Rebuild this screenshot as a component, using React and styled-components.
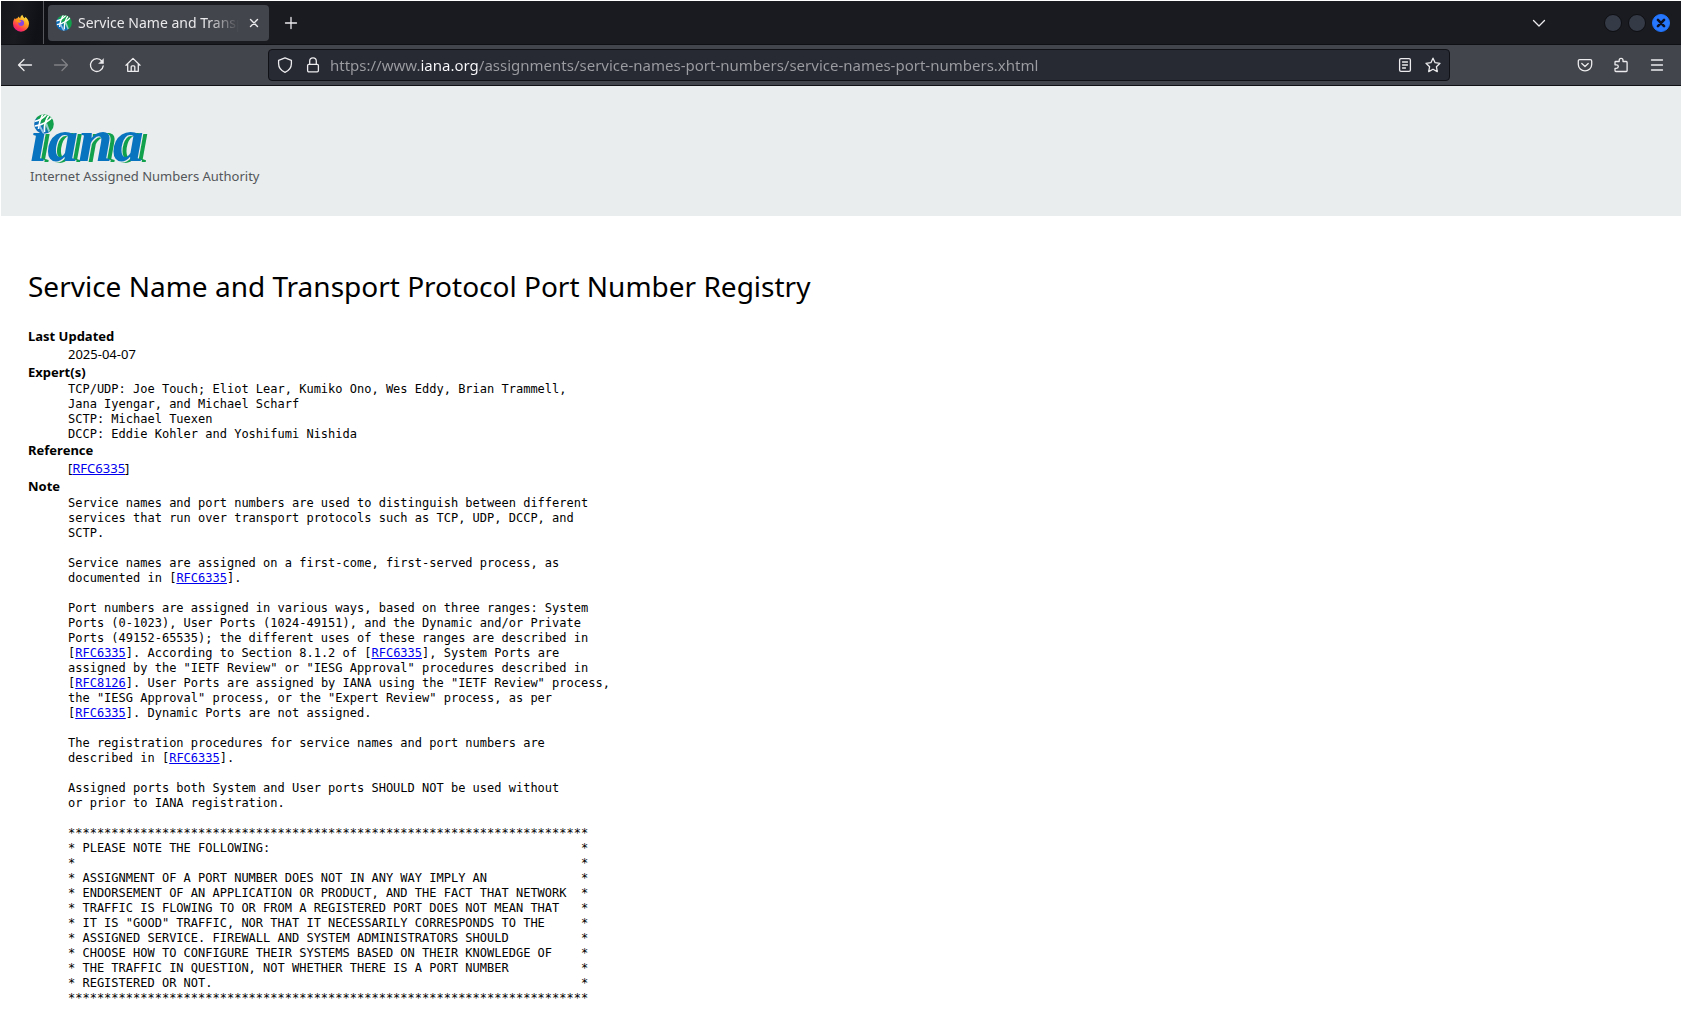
import React from "react";
import styled, { createGlobalStyle } from "styled-components";

const sans = '"Noto Sans", "Open Sans", sans-serif';
const mono = '"DejaVu Sans Mono", monospace';

const GlobalStyle = createGlobalStyle`
  *, *::before, *::after { box-sizing: border-box; }
  body { margin: 0; background: #fff; color: #000; font-family: ${sans}; }
`;

const Window = styled.div`
  min-height: 100vh;
  padding: 1px 1px 0;
  background: #fff;
`;

/* ---------- browser chrome ---------- */

const TabBar = styled.div`
  display: flex;
  align-items: center;
  height: 44px;
  border-bottom: 1px solid #0f1014;
  background: linear-gradient(100deg, #15161b 0, #1a1b20 20px, #101116 40px, #15161b 90px, #1a1b20 130px);
`;

const IconButton = styled.button`
  display: flex;
  flex: none;
  align-items: center;
  justify-content: center;
  width: ${(p) => p.$width || 36}px;
  height: 32px;
  padding: 0;
  border: 0;
  background: none;
  color: ${(p) => (p.$dim ? "#7f8085" : "#ececee")};
`;

const FirefoxView = styled(IconButton)`
  width: 43px;
  height: 43px;
  padding-right: 2px;
  border-right: 1px solid #55565b;
`;

const Tab = styled.div`
  display: flex;
  flex: none;
  align-items: center;
  width: 221px;
  height: 36px;
  margin-left: 4px;
  padding-left: 8px;
  border-radius: 4px;
  background: #43454c;
`;

const TabTitle = styled.span`
  flex: 1;
  min-width: 0;
  margin-left: 6px;
  overflow: hidden;
  color: #e9e9eb;
  font-size: 14px;
  line-height: 24px;
  white-space: nowrap;
  mask-image: linear-gradient(90deg, #000 calc(100% - 32px), transparent);
`;

const Spacer = styled.div`
  flex: 1;
`;

const WindowControls = styled.div`
  display: flex;
  gap: 6px;
  margin: 0 11px 0 47px;
`;

const WindowButton = styled.button`
  display: flex;
  align-items: center;
  justify-content: center;
  width: 18px;
  height: 18px;
  padding: 0;
  border: 1px solid ${(p) => (p.$close ? "#1f73fb" : "#0d0e11")};
  border-radius: 50%;
  background: ${(p) => (p.$close ? "#2777ff" : "#353a47")};
  color: #0c1020;
`;

const Toolbar = styled.div`
  display: flex;
  align-items: center;
  height: 41px;
  padding: 0 6px;
  border-bottom: 1px solid #0f1014;
  background: #43454c;
`;

const NavGroup = styled.nav`
  display: flex;
  flex: 1 1 0;
`;

const ToolGroup = styled.div`
  display: flex;
  flex: 1 1 0;
  justify-content: flex-end;
`;

const AddressBar = styled.div`
  display: flex;
  flex: 0 1 1218px;
  align-items: center;
  height: 32px;
  margin-left: 36px;
  padding: 0 2px;
  border: 1px solid #101116;
  border-radius: 4px;
  background: #272933;
`;

const AddressInput = styled.input`
  flex: 1;
  min-width: 0;
  height: 24px;
  margin-left: 3px;
  padding: 0;
  border: 0;
  outline: 0;
  background: linear-gradient(90deg, #9c9da2 91px, #fbfbfe 91px 149px, #9c9da2 149px);
  background-clip: text;
  color: transparent;
  font: 15px/24px ${sans};
`;

const AddressGroup = styled.div`
  display: flex;
  flex: 0 1 1218px;
`;

/* ---------- page ---------- */

const SiteHeader = styled.header`
  height: 130px;
  padding: 24px 29px;
  background: #e9eded;
`;

const Brand = styled.a`
  display: inline-flex;
  flex-direction: column;
  color: #53565a;
  text-decoration: none;
`;

const BrandMark = styled.span`
  position: relative;
  height: 56px;
`;

const BrandGlobe = styled.span`
  position: absolute;
  top: 4px;
  left: 4px;
  z-index: 1;
`;

const BrandWord = styled.span`
  display: block;
  padding-top: 5px;
  color: #0873bf;
  font: italic bold 62px/50px "Liberation Serif", serif;
  text-shadow: 1px 1px #e9eded, 2px 1px #12a04c, 3px 1px #12a04c, 4px 1px #12a04c, 5px 1px #12a04c;
`;

const BrandName = styled.span`
  font-size: 13px;
  line-height: 20px;
`;

const Article = styled.main`
  padding: 51px 27px 0;
`;

const Title = styled.h1`
  margin: 0 0 22px;
  font-size: 28px;
  font-weight: 400;
  line-height: 38px;
`;

const Details = styled.dl`
  margin: 0;
  font-size: 13px;
  line-height: 18px;
`;

const Term = styled.dt`
  font-weight: 700;
`;

const Detail = styled.dd`
  margin: 0 0 0 40px;
`;

const Pre = styled.pre`
  margin: 0;
  padding-top: 1px;
  margin-bottom: -1px;
  font: 12px/15px ${mono};
`;

const Line = styled.span`
  display: block;
  min-height: 15px;
`;

const Link = styled.a`
  color: #0000ee;
  text-decoration: underline;
`;

/* ---------- icons ---------- */

const Icon = ({ children, size = 16, width = 1.3 }) => (
  <svg
    width={size}
    height={size}
    viewBox="0 0 16 16"
    fill="none"
    stroke="currentColor"
    strokeWidth={width}
    strokeLinecap="round"
    strokeLinejoin="round"
    aria-hidden="true"
  >
    {children}
  </svg>
);

const Globe = ({ size, id }) => (
  <svg width={size} height={size} viewBox="0 0 20 20" aria-hidden="true">
    <defs>
      <clipPath id={id}>
        <circle cx="10" cy="10" r="9.8" />
      </clipPath>
      <linearGradient id={id + "-g"} x1="1" y1="0" x2="0" y2="1">
        <stop offset=".5" stopColor="#12a04c" />
        <stop offset=".62" stopColor="#0d6fbb" />
      </linearGradient>
    </defs>
    <g clipPath={`url(#${id})`}>
      <rect width="20" height="20" fill={`url(#${id}-g)`} />
      <g fill="none" stroke="#fff" strokeWidth="1.7">
        <path d="M0 7.500C5 6.500 10 4 13.500-1M1 12C8 11 15 7.500 19.500 1.500" />
        <path d="M9.500-1C6.500 4 5 9 4.500 15M15 1C11.500 6 10 12 10.500 18" />
      </g>
      <path d="M4.500 12l2-.6 4.500 8.600h-2zM11 10l2-1 3 8-1.500 1z" fill="#b8d8ef" opacity=".8" />
    </g>
  </svg>
);

const Firefox = () => (
  <svg width="18" height="18" viewBox="0 0 18 18" aria-hidden="true">
    <defs>
      <linearGradient id="fx-flame" x1=".85" y1=".05" x2=".25" y2="1">
        <stop offset="0" stopColor="#fff44f" />
        <stop offset=".4" stopColor="#ffa01e" />
        <stop offset=".75" stopColor="#ff3a50" />
        <stop offset="1" stopColor="#e31587" />
      </linearGradient>
    </defs>
    <path
      d="M10.400.8c.3 1.700 1.200 2.400 2.300 3.500.5-.3.500-.9.400-1.500 2.300 1.500 3.900 4 3.900 6.900A8 8 0 0 1 1 9.700c0-2.200.7-4 2-5.600l.3 1.100c.7-.8 1.500-1 2.200-.9.200-.9.700-1.500 1.500-1.900 0 .8.500 1.500 1.200 1.900.1-1.400.8-2.700 2.200-3.500z"
      fill="url(#fx-flame)"
    />
    <circle cx="9.200" cy="9" r="2.900" fill="#8a45e0" />
    <path d="M3.800 6.600c2-1 3.600.4 5.600.3-.3 1.200-1.500 1.200-2 2.100-.7-.8-2.500-.5-3.600-2.400z" fill="#ff980e" />
  </svg>
);

/* ---------- content ---------- */

const notice = [
  "PLEASE NOTE THE FOLLOWING:",
  "",
  "ASSIGNMENT OF A PORT NUMBER DOES NOT IN ANY WAY IMPLY AN",
  "ENDORSEMENT OF AN APPLICATION OR PRODUCT, AND THE FACT THAT NETWORK",
  "TRAFFIC IS FLOWING TO OR FROM A REGISTERED PORT DOES NOT MEAN THAT",
  'IT IS "GOOD" TRAFFIC, NOR THAT IT NECESSARILY CORRESPONDS TO THE',
  "ASSIGNED SERVICE. FIREWALL AND SYSTEM ADMINISTRATORS SHOULD",
  "CHOOSE HOW TO CONFIGURE THEIR SYSTEMS BASED ON THEIR KNOWLEDGE OF",
  "THE TRAFFIC IN QUESTION, NOT WHETHER THERE IS A PORT NUMBER",
  "REGISTERED OR NOT.",
];

const starRow = "*".repeat(72);
const noticeBox = [starRow, ...notice.map((line) => `* ${line.padEnd(69)}*`), starRow].join("\n");

const experts = `TCP/UDP: Joe Touch; Eliot Lear, Kumiko Ono, Wes Eddy, Brian Trammell,
Jana Iyengar, and Michael Scharf
SCTP: Michael Tuexen
DCCP: Eddie Kohler and Yoshifumi Nishida`;

const note = `Service names and port numbers are used to distinguish between different
services that run over transport protocols such as TCP, UDP, DCCP, and
SCTP.

Service names are assigned on a first-come, first-served process, as
documented in [RFC6335].

Port numbers are assigned in various ways, based on three ranges: System
Ports (0-1023), User Ports (1024-49151), and the Dynamic and/or Private
Ports (49152-65535); the different uses of these ranges are described in
[RFC6335]. According to Section 8.1.2 of [RFC6335], System Ports are
assigned by the "IETF Review" or "IESG Approval" procedures described in
[RFC8126]. User Ports are assigned by IANA using the "IETF Review" process,
the "IESG Approval" process, or the "Expert Review" process, as per
[RFC6335]. Dynamic Ports are not assigned.

The registration procedures for service names and port numbers are
described in [RFC6335].

Assigned ports both System and User ports SHOULD NOT be used without
or prior to IANA registration.

${noticeBox}`;

// Turns every RFC number in a text into a link to that RFC.
const withLinks = (text) =>
  text.split(/(RFC\d+)/).map((part, i) =>
    i % 2 ? (
      <Link key={i} href={`#${part.toLowerCase()}`}>
        {part}
      </Link>
    ) : (
      part
    )
  );

const Preformatted = ({ text }) => (
  <Pre>
    {text.split("\n").map((line, i) => (
      <Line key={i}>{withLinks(line)}</Line>
    ))}
  </Pre>
);

const url = "https://www.iana.org/assignments/service-names-port-numbers/service-names-port-numbers.xhtml";

export default function App() {
  return (
    <Window>
      <GlobalStyle />
      <TabBar>
        <FirefoxView aria-label="Firefox View">
          <Firefox />
        </FirefoxView>
        <Tab>
          <Globe size={16} id="tab-globe" />
          <TabTitle>Service Name and Transport Protocol</TabTitle>
          <IconButton $width={30} aria-label="Close tab">
            <Icon width={1.4}>
              <path d="M4.500 4.500l7 7M11.500 4.500l-7 7" />
            </Icon>
          </IconButton>
        </Tab>
        <IconButton $width={44} aria-label="New tab">
          <Icon>
            <path d="M8 2.500v11M2.500 8h11" />
          </Icon>
        </IconButton>
        <Spacer />
        <IconButton aria-label="List all tabs">
          <Icon>
            <path d="M2.500 5.500L8 11l5.500-5.500" />
          </Icon>
        </IconButton>
        <WindowControls>
          <WindowButton aria-label="Minimize" />
          <WindowButton aria-label="Maximize" />
          <WindowButton $close aria-label="Close">
            <Icon size={14} width={3}>
              <path d="M4.500 4.500l7 7M11.500 4.500l-7 7" />
            </Icon>
          </WindowButton>
        </WindowControls>
      </TabBar>

      <Toolbar>
        <NavGroup aria-label="Navigation">
          <IconButton aria-label="Back">
            <Icon>
              <path d="M14.500 8h-13M7 2.500L1.500 8 7 13.500" />
            </Icon>
          </IconButton>
          <IconButton $dim aria-label="Forward">
            <Icon>
              <path d="M1.500 8h13M9 2.500L14.500 8 9 13.500" />
            </Icon>
          </IconButton>
          <IconButton aria-label="Reload">
            <Icon>
              <path d="M14.200 8.800A6.400 6.400 0 1 1 12.800 4" />
              <path d="M14.500 2v4.500H10z" fill="currentColor" strokeWidth=".5" />
            </Icon>
          </IconButton>
          <IconButton aria-label="Home">
            <Icon>
              <path d="M1 8.200L8 1.400l7 6.800M2.700 7v7.300h10.600V7M6.200 14.200V9.800c0-.6.4-1 1-1h1.600c.6 0 1 .4 1 1v4.400" />
            </Icon>
          </IconButton>
        </NavGroup>
        <AddressGroup>
          <AddressBar>
            <IconButton $width={28} aria-label="Tracking protection">
              <Icon>
                <path d="M8 .8l6.400 2.500v3.500c0 4-2.900 7-6.400 8.500-3.500-1.500-6.400-4.500-6.400-8.500V3.300z" />
              </Icon>
            </IconButton>
            <IconButton $width={28} aria-label="Connection secure">
              <Icon>
                <rect x="2.600" y="7.300" width="10.800" height="7.500" rx="1.200" />
                <path d="M4.700 7V4.100a3.300 3.300 0 0 1 6.600 0V7" />
              </Icon>
            </IconButton>
            <AddressInput aria-label="Address" defaultValue={url} spellCheck={false} />
            <IconButton $width={28} aria-label="Reader view">
              <Icon>
                <rect x="2.600" y="1.700" width="10.800" height="12.600" rx="1.400" />
                <path d="M5.500 5h5M5.500 8h5M5.500 11h3" />
              </Icon>
            </IconButton>
            <IconButton $width={28} aria-label="Bookmark this page">
              <Icon>
                <path d="M8 1.200l2.100 4.500 4.900.6-3.600 3.400.9 4.900L8 12.200l-4.300 2.400.9-4.900L1 6.300l4.900-.6z" />
              </Icon>
            </IconButton>
          </AddressBar>
        </AddressGroup>
        <ToolGroup>
          <IconButton aria-label="Save to Pocket">
            <Icon>
              <path d="M2.700 2.600h10.600c.8 0 1.400.6 1.400 1.400v3.500a6.700 6.300 0 0 1-13.400 0V4c0-.8.600-1.400 1.400-1.400zM4.800 6.500L8 9.500l3.200-3" />
            </Icon>
          </IconButton>
          <IconButton aria-label="Extensions">
            <Icon>
              <path d="M2 6.500V5.300c0-.5.400-.8.800-.8h3.400V3.200a1.900 1.900 0 0 1 3.800 0v1.300h3.200c.6 0 .9.400.9.900v8.200c0 .5-.4.900-.9.900H2.900c-.5 0-.9-.4-.9-.9v-2.200h1.500a1.800 1.800 0 0 0 0-3.600H2z" />
            </Icon>
          </IconButton>
          <IconButton aria-label="Open application menu">
            <Icon>
              <path d="M2.500 3h11M2.500 8h11M2.500 13h11" />
            </Icon>
          </IconButton>
        </ToolGroup>
      </Toolbar>

      <SiteHeader>
        <Brand href="#home">
          <BrandMark>
            <BrandGlobe>
              <Globe size={20} id="brand-globe" />
            </BrandGlobe>
            <BrandWord>ıana</BrandWord>
          </BrandMark>
          <BrandName>Internet Assigned Numbers Authority</BrandName>
        </Brand>
      </SiteHeader>

      <Article>
        <Title>Service Name and Transport Protocol Port Number Registry</Title>
        <Details>
          <Term>Last Updated</Term>
          <Detail>2025-04-07</Detail>
          <Term>Expert(s)</Term>
          <Detail>
            <Preformatted text={experts} />
          </Detail>
          <Term>Reference</Term>
          <Detail>{withLinks("[RFC6335]")}</Detail>
          <Term>Note</Term>
          <Detail>
            <Preformatted text={note} />
          </Detail>
        </Details>
      </Article>
    </Window>
  );
}
